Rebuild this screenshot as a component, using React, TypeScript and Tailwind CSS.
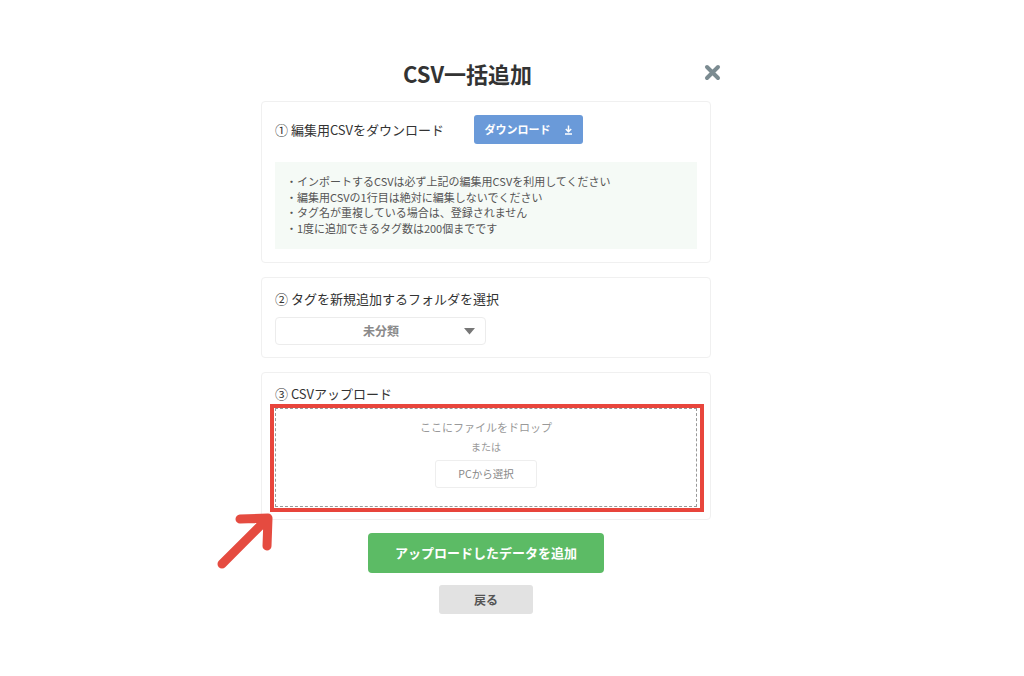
import React from "react";

const font = '"Noto Sans CJK JP", "Noto Sans", "Liberation Sans", sans-serif';

function Card({ children, className = "" }: { children: React.ReactNode; className?: string }) {
  return (
    <div className={"w-[450px] rounded-[4px] border border-[#f0f0f0] bg-white px-[13px] pt-[13px] " + className}>{children}</div>
  );
}

export default function App() {
  return (
    <div className="relative h-[676px] w-[1024px] overflow-hidden bg-white text-[#333]" style={{ fontFamily: font }}>
      <div className="ml-[261px] flex w-[450px] flex-col pt-[58px]">
        {/* header */}
        <div className="flex h-[30px] w-[460px] items-center">
          <div className="flex-1 pr-[30px] text-center text-[22px] font-bold leading-[30px] text-[#333]">CSV一括追加</div>
          <svg width="17" height="17" viewBox="0 0 17 17" className="mb-[2px]">
            <path d="M3 3 L14 14 M14 3 L3 14" stroke="#7b8b91" strokeWidth="4" strokeLinecap="round" />
          </svg>
        </div>

        <div className="mt-[13px] flex flex-col gap-[14px]">
          {/* card 1 */}
          <Card className="pb-[13px]">
            <div className="flex items-center">
              <div className="w-[199px] text-[13px] leading-[16px] text-[#333]">① 編集用CSVをダウンロード</div>
              <div className="flex h-[29px] w-[109px] items-center justify-center gap-[13px] rounded-[3px] bg-[#6a9ad9] text-[11px] font-bold text-white">
                <span>ダウンロード</span>
                <svg width="9" height="10" viewBox="0 0 9 10">
                  <path d="M4.5 0.5 V6.5 M1.8 4 L4.5 6.7 L7.2 4 M1 9 H8" stroke="white" strokeWidth="1.5" fill="none" />
                </svg>
              </div>
            </div>
            <div className="mt-[18px] h-[87px] bg-[#f5faf6] px-[11px] pt-[12px] text-[11px] leading-[15.7px] text-[#555]">
              <div>・インポートするCSVは必ず上記の編集用CSVを利用してください</div>
              <div>・編集用CSVの1行目は絶対に編集しないでください</div>
              <div>・タグ名が重複している場合は、登録されません</div>
              <div>・1度に追加できるタグ数は200個までです</div>
            </div>
          </Card>

          {/* card 2 */}
          <Card className="pb-[12px]">
            <div className="text-[13px] leading-[16px] text-[#333]">② タグを新規追加するフォルダを選択</div>
            <div className="mt-[10px] flex h-[28px] w-[211px] items-center rounded-[4px] border border-[#ececec] bg-white">
              <div className="flex-1 pl-[22px] text-center text-[12px] font-bold text-[#8a8a8a]">未分類</div>
              <svg width="11" height="7" viewBox="0 0 11 7" className="mr-[10px]">
                <path d="M0 0 H11 L5.5 6.5 Z" fill="#777" />
              </svg>
            </div>
          </Card>

          {/* card 3 */}
          <Card className="pb-[12px]">
            <div className="text-[13px] leading-[16px] text-[#333]">③ CSVアップロード</div>
            <div className="mt-[6px] flex h-[99px] flex-col items-center border border-dashed border-[#999] pt-[10px]">
              <div className="text-[11px] leading-[16px] text-[#999]">ここにファイルをドロップ</div>
              <div className="mt-[5px] text-[10px] leading-[14px] text-[#999]">または</div>
              <div className="mt-[6px] flex h-[28px] w-[102px] items-center justify-center rounded-[3px] border border-[#eeeeee] text-[10.5px] text-[#888]">
                PCから選択
              </div>
            </div>
          </Card>
        </div>

        {/* buttons */}
        <div className="mt-[13px] flex flex-col items-center gap-[12px]">
          <div className="flex h-[40px] w-[236px] items-center justify-center rounded-[4px] bg-[#5cbb65] text-[13px] font-bold text-white">
            アップロードしたデータを追加
          </div>
          <div className="flex h-[29px] w-[94px] items-center justify-center rounded-[3px] bg-[#e2e2e2] text-[12px] font-bold text-[#555]">
            戻る
          </div>
        </div>
      </div>

      {/* annotation: red box */}
      <div className="absolute left-[270px] top-[404px] h-[108px] w-[434px] border-[4px] border-[#e8453c]" />
      {/* annotation: arrow */}
      <svg className="absolute left-[210px] top-[505px]" width="75" height="75" viewBox="0 0 75 75">
        <path d="M12 59 L55 16 M30 14 L58 13 L57 41" stroke="#e54b40" strokeWidth="9" strokeLinecap="round" strokeLinejoin="round" fill="none" />
      </svg>
    </div>
  );
}
